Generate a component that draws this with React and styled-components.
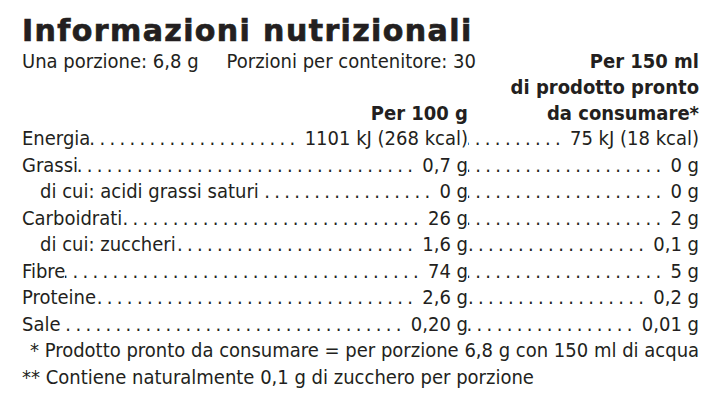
import styled, { createGlobalStyle } from 'styled-components';

const rows = [
    { label: 'Energia', a: '1101 kJ (268 kcal)', b: '75 kJ (18 kcal)' },
    { label: 'Grassi', a: '0,7 g', b: '0 g' },
    { label: 'di cui: acidi grassi saturi', a: '0 g', b: '0 g', sub: true },
    { label: 'Carboidrati', a: '26 g', b: '2 g' },
    { label: 'di cui: zuccheri', a: '1,6 g', b: '0,1 g', sub: true },
    { label: 'Fibre', a: '74 g', b: '5 g' },
    { label: 'Proteine', a: '2,6 g', b: '0,2 g' },
    { label: 'Sale', a: '0,20 g', b: '0,01 g' },
]

function App() {
    return <Panel>
        <Global />
        <Title>Informazioni nutrizionali</Title>
        <Header>
            <HeadLeft>
                <Serving>
                    <span>Una porzione: 6,8 g</span>
                    <span>Porzioni per contenitore: 30</span>
                </Serving>
                <Bold>Per 100 g</Bold>
            </HeadLeft>
            <HeadRight>
                <Bold>Per 150 ml</Bold>
                <Bold>di prodotto pronto</Bold>
                <Bold>da consumare*</Bold>
            </HeadRight>
        </Header>
        <Table>
            {rows.map((r) => (
                <Row key={r.label}>
                    <Cell>
                        <Label sub={r.sub}>{r.label}</Label>
                        <Leader />
                        <span>{r.a}</span>
                    </Cell>
                    <Cell>
                        <Leader />
                        <span>{r.b}</span>
                    </Cell>
                </Row>
            ))}
        </Table>
        <Note indent>* Prodotto pronto da consumare = per porzione 6,8 g con 150 ml di acqua</Note>
        <Note>** Contiene naturalmente 0,1 g di zucchero per porzione</Note>
    </Panel>
}

export default App;

const Global = createGlobalStyle`
    body { margin: 0; background: #fff; }
`
const Panel = styled.div`
    width: 720px;
    height: 402px;
    box-sizing: border-box;
    padding: 14px 21px 0 22px;
    background: #fff;
    color: #231f20;
    font-family: "DejaVu Sans Condensed", "DejaVu Sans", sans-serif;
    font-size: 20px;
    overflow: hidden;`
const Title = styled.h1`
    margin: 0;
    font-family: "DejaVu Sans", sans-serif;
    font-weight: 900;
    font-size: 30px;
    line-height: 34px;
    letter-spacing: 1.4px;
    -webkit-text-stroke: 0.7px #231f20;
    white-space: nowrap;`
const Header = styled.div`
    display: grid;
    grid-template-columns: minmax(0, 1fr) 231px;
    line-height: 26px;`
const HeadLeft = styled.div`
    display: flex;
    flex-direction: column;
    justify-content: space-between;
    min-width: 0;`
const Serving = styled.div`
    display: flex;
    gap: 28px;
    white-space: nowrap;`
const HeadRight = styled.div`
    display: flex;
    flex-direction: column;
    align-items: flex-end;`
const Bold = styled.div`
    font-weight: bold;
    text-align: right;
    white-space: nowrap;`
const Table = styled.div`
    margin-top: -1px;
    line-height: 26.5px;`
const Row = styled.div`
    display: grid;
    grid-template-columns: minmax(0, 1fr) 231px;`
const Cell = styled.div`
    display: flex;
    min-width: 0;
    white-space: nowrap;`
const Label = styled.span`
    flex: none;
    padding-left: ${(p) => (p.sub ? '18px' : '0')};`
const Leader = styled.span`
    flex: 1 1 0;
    min-width: 0;
    overflow: hidden;
    padding: 0 5px 0 4px;
    direction: rtl;
    &::before {
        content: '................................................................';
        letter-spacing: 4.3px;
    }`
const Note = styled.div`
    line-height: 26.5px;
    padding-left: ${(p) => (p.indent ? '8px' : '0')};
    white-space: nowrap;`
